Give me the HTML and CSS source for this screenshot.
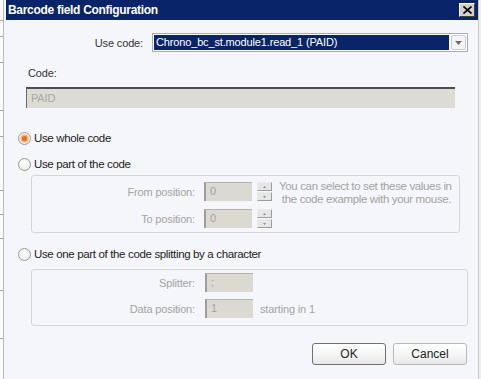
FILE: index.html
```html
<!DOCTYPE html>
<html>
<head>
<meta charset="utf-8">
<link rel="stylesheet" href="styles.css">
</head>
<body>
<div class="screen">
  <div class="backwin">
    <div class="tick t1"></div><div class="tick t2"></div><div class="tick t3"></div><div class="tick t4"></div><div class="tick t5"></div><div class="tick t6"></div><div class="tick t7"></div><div class="tick t8"></div><div class="tick t9"></div><div class="tick t10"></div>
  </div>
  <div class="dialog">
    <div class="titlebar">
      <span class="title">Barcode field Configuration</span>
      <span class="close"><svg width="9" height="8" viewBox="0 0 9 8"><path d="M0.5 0.5 L8.5 7.5 M8.5 0.5 L0.5 7.5" stroke="#000" stroke-width="1.6"/></svg></span>
    </div>
    <div class="content">
      <div class="row-code">
        <label class="lbl-use">Use code:</label>
        <div class="combo">
          <div class="combo-sel">Chrono_bc_st.module1.read_1 (PAID)</div>
          <div class="combo-btn"><svg width="7" height="4" viewBox="0 0 7 4"><path d="M0 0 H7 L3.5 4 Z" fill="#6d6d6d"/></svg></div>
        </div>
      </div>
      <div class="lbl-code">Code:</div>
      <div class="code-box">PAID</div>

      <div class="radio-row r1"><span class="radio checked"></span><span>Use whole code</span></div>
      <div class="radio-row r2"><span class="radio"></span><span>Use part of the code</span></div>

      <div class="group g1">
        <div class="g1-fields">
          <div class="frow">
            <span class="flabel">From position:</span>
            <span class="field">0</span>
            <span class="spin"><span class="sb"><svg width="3" height="2" viewBox="0 0 3 2"><path d="M0 2 H3 L1.5 0 Z" fill="#888"/></svg></span><span class="sb"><svg width="3" height="2" viewBox="0 0 3 2"><path d="M0 0 H3 L1.5 2 Z" fill="#888"/></svg></span></span>
          </div>
          <div class="frow">
            <span class="flabel">To position:</span>
            <span class="field">0</span>
            <span class="spin"><span class="sb"><svg width="3" height="2" viewBox="0 0 3 2"><path d="M0 2 H3 L1.5 0 Z" fill="#888"/></svg></span><span class="sb"><svg width="3" height="2" viewBox="0 0 3 2"><path d="M0 0 H3 L1.5 2 Z" fill="#888"/></svg></span></span>
          </div>
        </div>
        <div class="hint">You can select to set these values in<br>&nbsp;the code example with your mouse.</div>
      </div>

      <div class="radio-row r3"><span class="radio"></span><span>Use one part of the code splitting by a character</span></div>

      <div class="group g2">
        <div class="frow">
          <span class="flabel">Splitter:</span>
          <span class="field f2">;</span>
        </div>
        <div class="frow">
          <span class="flabel">Data position:</span>
          <span class="field f2">1</span>
          <span class="after">starting in 1</span>
        </div>
      </div>

      <div class="buttons">
        <button class="btn ok">OK</button>
        <button class="btn">Cancel</button>
      </div>
    </div>
  </div>
  <div class="rightedge"></div>
</div>
</body>
</html>
```

FILE: styles.css
```css
html, body {
  margin: 0;
  padding: 0;
  width: 481px;
  height: 379px;
  overflow: hidden;
  background: #f5f6fb;
}
body {
  font-family: "Liberation Sans", Arial, sans-serif;
  font-size: 11px;
  letter-spacing: -0.15px;
  color: #222;
}
.screen {
  display: flex;
  height: 379px;
}
.backwin {
  width: 3px;
  background: #fbfbfb;
  border-right: 1px solid #b9b9b9;
  position: relative;
  flex: none;
}
.tick {
  position: absolute;
  left: 0;
  width: 3px;
  height: 1px;
  background: #a8a8a8;
}
.t1 { top: 20px; } .t2 { top: 36px; } .t3 { top: 62px; } .t4 { top: 110px; }
.t5 { top: 136px; } .t6 { top: 190px; } .t7 { top: 214px; } .t8 { top: 238px; }
.t9 { top: 290px; } .t10 { top: 338px; }
.dialog {
  flex: none;
  width: 472px;
  margin-left: 2px;
  display: flex;
  flex-direction: column;
  background: #f5f6fb;
}
.rightedge {
  flex: 1;
  border-left: 1px solid #c8c8c8;
  background: #eeeeee;
}
.titlebar {
  height: 20px;
  background: #0a246a;
  display: flex;
  align-items: center;
  justify-content: space-between;
  padding-left: 2px;
  padding-right: 3px;
}
.title {
  color: #fff;
  font-weight: bold;
  font-size: 12px;
  letter-spacing: -0.3px;
}
.close {
  width: 16px;
  height: 14px;
  background: #d4d0c8;
  border: 1px solid;
  border-color: #fff #404040 #404040 #fff;
  box-sizing: border-box;
  display: flex;
  align-items: center;
  justify-content: center;
}
.content {
  position: relative;
}
.row-code {
  display: flex;
  align-items: center;
  margin-top: 13px;
}
.lbl-use {
  width: 137px;
  text-align: right;
  margin-right: 9px;
  color: #333;
}
.combo {
  width: 316px;
  height: 19px;
  box-sizing: border-box;
  border: 1px solid #a5acb5;
  background: #fff;
  display: flex;
  align-items: center;
  padding: 1px;
}
.combo-sel {
  flex: 1;
  height: 15px;
  background: #0a246a;
  color: #fff;
  line-height: 15px;
  padding-left: 2px;
  letter-spacing: -0.15px;
}
.combo-btn {
  width: 15px;
  height: 15px;
  margin-left: 2px;
  border: 1px solid #c9ccd2;
  border-radius: 2px;
  box-sizing: border-box;
  background: #f4f4f4;
  display: flex;
  align-items: center;
  justify-content: center;
}
.lbl-code {
  margin-top: 14px;
  margin-left: 22px;
  line-height: 14px;
  color: #333;
}
.code-box {
  margin-top: 7px;
  margin-left: 20px;
  width: 429px;
  height: 21px;
  box-sizing: border-box;
  background: #dedbd5;
  border-top: 2px solid #4f4a4f;
  border-left: 1px solid #6a6468;
  color: #a9a6a2;
  padding-left: 4px;
  line-height: 18px;
}
.radio-row {
  display: flex;
  align-items: center;
  height: 16px;
  margin-left: 12px;
  color: #222;
  font-size: 11.5px;
  letter-spacing: -0.35px;
}
.r1 { margin-top: 22px; }
.r2 { margin-top: 10px; }
.r3 { margin-top: 13px; }
.radio {
  width: 11px;
  height: 11px;
  border-radius: 50%;
  border: 1px solid #9a9a9a;
  background: radial-gradient(circle at 40% 35%, #ffffff 0%, #ececec 70%, #d6d6d6 100%);
  margin-right: 3px;
  display: flex;
  align-items: center;
  justify-content: center;
}
.radio.checked::after {
  content: "";
  width: 5px;
  height: 5px;
  border-radius: 50%;
  background: #e0751e;
  box-shadow: 0 0 0 1.5px #f6b46a;
}
.group {
  margin-left: 25px;
  border: 1px solid #d5d5d5;
  border-radius: 3px;
  box-sizing: border-box;
  background: #f5f6fb;
}
.g1 {
  margin-top: 3px;
  width: 429px;
  height: 58px;
  padding-top: 6px;
  display: flex;
}
.g2 {
  margin-top: 7px;
  width: 437px;
  height: 57px;
  padding-top: 3px;
}
.frow {
  display: flex;
  align-items: center;
  height: 19px;
  margin-bottom: 8px;
}
.g2 .frow { margin-bottom: 7px; }
.flabel {
  width: 163px;
  text-align: right;
  margin-right: 9px;
  color: #a3a3a3;
}
.field {
  width: 48px;
  height: 19px;
  box-sizing: border-box;
  background: #dcd9d3;
  border-top: 1px solid #b6b3ad;
  border-left: 2px solid #a09d98;
  color: #a3a3a3;
  padding-left: 4px;
  line-height: 17px;
}
.f2 { margin-left: 1px; }
.spin {
  display: flex;
  flex-direction: column;
  margin-left: 5px;
  gap: 1px;
}
.sb {
  width: 15px;
  height: 9px;
  box-sizing: border-box;
  border: 1px solid;
  border-color: #ececec #9c9c9c #9c9c9c #ececec;
  background: #e6e6e6;
  display: flex;
  align-items: center;
  justify-content: center;
}
.hint {
  margin-left: 7px;
  color: #a3a3a3;
  line-height: 13px;
  margin-top: -2px;
  white-space: nowrap;
  font-size: 11.5px;
  letter-spacing: -0.35px;
}
.after {
  margin-left: 7px;
  color: #a3a3a3;
}
.buttons {
  display: flex;
  gap: 7px;
  margin-top: 17px;
  margin-left: 306px;
}
.btn {
  width: 74px;
  height: 22px;
  font-family: "Liberation Sans", Arial, sans-serif;
  font-size: 12px;
  color: #222;
  border: 1px solid #b8b8b8;
  border-radius: 3px;
  background: linear-gradient(#ffffff, #f6f6f6 50%, #e7e7e7);
  padding: 0;
}
.btn.ok {
  border-color: #707070;
}
```
